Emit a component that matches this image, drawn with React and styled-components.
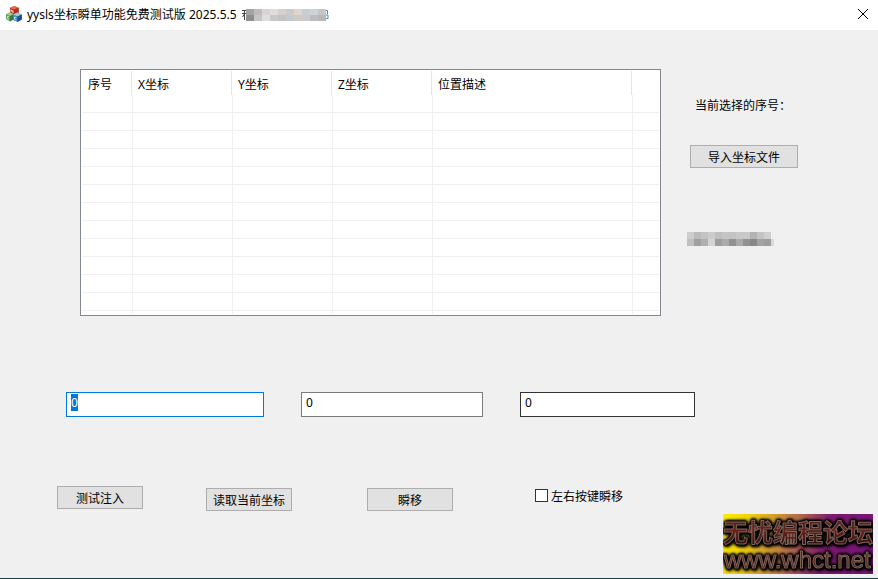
import React, { useEffect, useRef } from 'react'
import styled, { createGlobalStyle } from 'styled-components'

const GlobalStyle = createGlobalStyle`
  * {
    box-sizing: border-box;
  }

  body {
    margin: 0;
    background: #f0f0f0;
    color: #000;
    font: 12px/16px 'Noto Sans', 'Noto Sans CJK SC', sans-serif;
  }

  button,
  input {
    font: inherit;
    color: inherit;
    border-radius: 0;
  }
`

const Window = styled.div`
  position: relative;
  display: flex;
  flex-direction: column;
  min-height: 100vh;
  border-bottom: 1px solid #17444c;
`

const TitleBar = styled.header`
  display: flex;
  align-items: center;
  gap: 5px;
  height: 30px;
  padding: 0 10px 2px 6px;
  background: #fff;
`

const Title = styled.h1`
  display: flex;
  align-items: center;
  gap: 5px;
  flex: 1;
  margin: 0;
  padding-top: 2px;
  font-size: 12px;
  font-weight: 400;
  white-space: nowrap;
`

const CloseButton = styled.button`
  display: flex;
  padding: 0;
  border: 0;
  background: none;
`

const Content = styled.main`
  flex: 1;
  padding-top: 39px;
`

const TopRow = styled.section`
  display: flex;
  align-items: flex-start;
  gap: 26px;
  padding-left: 80px;
`

const ListFrame = styled.div`
  flex: 1;
  padding: 1px;
  border: 1px solid #828790;
  background: #fff;
`

const CoordTable = styled.table`
  width: 100%;
  table-layout: fixed;
  border-collapse: separate;
  border-spacing: 0;
`

const HeadCell = styled.th`
  width: ${props => props.$width};
  height: 24px;
  padding: 3px 6px 0;
  border-right: ${props => (props.$width === 'auto' ? '0' : '1px solid #e5e5e5')};
  font-weight: 400;
  text-align: left;
`

const Cell = styled.td`
  height: ${props => (props.$cut ? '3px' : '18px')};
  padding: 0;
  border-bottom: ${props => (props.$cut ? '0' : '1px solid #f0f0f0')};

  & + & {
    border-left: 1px solid #f0f0f0;
  }
`

const Side = styled.aside`
  display: flex;
  flex-direction: column;
  align-items: flex-start;
  width: 191px;
  padding-top: 29px;
`

const SideLabel = styled.p`
  margin: 0 0 31px;
  padding-left: 8px;
`

const Button = styled.button`
  width: ${props => (props.$wide ? '108px' : '86px')};
  height: 23px;
  padding: 2px 0 0;
  border: 1px solid #adadad;
  background: #e1e1e1;
  line-height: 16px;
  white-space: nowrap;
  align-self: ${props => props.$align || 'auto'};
`

const SideButton = styled(Button)`
  margin: 0 0 64px 3px;
`

const Inputs = styled.section`
  display: grid;
  grid-template-columns: 198fr 182fr 175fr;
  gap: 37px;
  padding: 76px 183px 0 66px;
`

const Input = styled.input`
  width: 100%;
  min-width: 0;
  height: 25px;
  padding: 0 4px 4px;
  border: 1px solid ${props => props.$border};
  background: #fff;
  outline: none;

  &:focus {
    border-color: #0078d7;
  }

  &::selection {
    background: #0078d7;
    color: #fff;
  }
`

const Actions = styled.section`
  display: grid;
  grid-template-columns: 149fr 161fr 168fr 343fr;
  min-height: 25px;
  margin-top: 69px;
  padding-left: 57px;
`

const CheckLabel = styled.label`
  display: flex;
  align-items: flex-start;
  gap: 3px;
  padding-top: 3px;
`

const CheckBox = styled.input`
  appearance: none;
  width: 13px;
  height: 13px;
  margin: 0;
  border: 1px solid #333;
  background: #fff;

  &:checked {
    background: #333;
  }
`

const Banner = styled.svg`
  position: absolute;
  right: 5px;
  bottom: 4px;
`

const BannerText = styled.g`
  fill: url(#ink);
  stroke: #7d6459;
  stroke-width: 1px;
  stroke-linejoin: round;
  filter: drop-shadow(0 0 1px #000) drop-shadow(0 0 1px #000) drop-shadow(0 0 1px #000)
    drop-shadow(1px 1px 1px #000);
`

const columns = [
  { name: '序号', width: '50px' },
  { name: 'X坐标', width: '100px' },
  { name: 'Y坐标', width: '100px' },
  { name: 'Z坐标', width: '100px' },
  { name: '位置描述', width: '200px' },
  { name: '', width: 'auto' },
]

const rows = Array.from({ length: 13 }, (_, i) => i)

const titleBlocks = [
  ['#a3a3a3', '#bdbdbd', '#d9d5d5', '#e2dcda', '#d5d0ce', '#c9cbcd', '#dcd6cf', '#c8cdd4', '#d2d2d4', '#c5c6c8'],
  ['#8e8e8e', '#c4c4c4', '#dedede', '#cac8c8', '#c6c2c0', '#c6c9cc', '#cfcac4', '#c9cbcd', '#bcbdc0', '#b5b7b9'],
]

const sideBlocks = [
  ['#cdcdcd', '#bcbcbc', '#c4c4c4', '#cbcbcb', '#bfbfbf', '#c5c5c5', '#c4c4c4', '#c8c8c8', '#c8c8c8', '#b3b3b3', '#c4c4c4', '#d0d0d0'],
  ['#bfbfbf', '#a0a0a0', '#afafaf', '#d3d3d3', '#9d9d9d', '#ababab', '#929292', '#aaaaaa', '#929292', '#888888', '#a2a2a2', '#9d9d9d'],
]

const AppIcon = () => (
  <svg width="16" height="16" viewBox="0 0 16 16" aria-hidden="true">
    <path d="M4 1.8 8.4 0 12.6 1.8v5.6L8 9.6 4 7.6z" fill="#c43a24" />
    <path d="M4 1.8 8.4 0 12.6 1.8 7.8 3.6z" fill="#e0705a" />
    <path d="M7.8 3.6 12.6 1.8v5.6L8 9.6z" fill="#b5301c" />
    <path d="M0 8.2 3.8 6.2 7.6 8.2v5L4 15.4 0 13z" fill="#5c9f50" />
    <path d="M0 8.2 3.8 6.2 7.6 8.2 4 10z" fill="#a2cb8d" />
    <path d="M4 10 7.6 8.2v5L4 15.4z" fill="#357a40" />
    <path d="M7 8.6 11.6 6.6 15.8 8.4v5.2L11.4 16 7 14z" fill="#3d82be" />
    <path d="M7 8.6 11.6 6.6 15.8 8.4 11.4 10.4z" fill="#9bc7e7" />
    <path d="M11.4 10.4 15.8 8.4v5.2L11.4 16z" fill="#1d4e91" />
    <path d="M5 6V3.8L6 5.2 7 4.8V7M3 10.8l-1.6-.4v2l1.6.8M10.4 11.6l-1.8-.6v2.4l1.8.7" fill="none" stroke="#fff" strokeWidth=".7" />
  </svg>
)

const TitleMosaic = () => (
  <svg width="87" height="12" viewBox="0 0 87 12" aria-hidden="true">
    <path d="M0 1.5h4M2.5 1v10M0 4.5h4M2.5 5 .5 8" fill="none" stroke="#444" />
    {titleBlocks.map((line, y) =>
      line.map((fill, x) => (
        <rect key={`${x}-${y}`} x={4 + x * 8} y={y * 6} width="8" height="6" fill={fill} />
      ))
    )}
    <path d="M84 1.5h1.5v3.5M84 6h2v3.5h-2" fill="none" stroke="#5689b0" />
  </svg>
)

const SideMosaic = () => (
  <svg width="88" height="14" viewBox="0 0 88 14" aria-hidden="true">
    {sideBlocks.map((line, y) =>
      line.map((fill, x) => (
        <rect key={`${x}-${y}`} x={x * 7} y={y * 7} width="7" height="7" fill={fill} />
      ))
    )}
    <rect x="84" y="7" width="3" height="7" fill="#d9d9d9" />
  </svg>
)

const SiteBanner = () => (
  <Banner width="150" height="60" viewBox="0 0 150 60">
    <defs>
      <linearGradient id="sky" x1="0" x2="1" y1="0" y2="0.1">
        <stop offset="0" stopColor="#fff000" />
        <stop offset=".18" stopColor="#efd10c" />
        <stop offset=".5" stopColor="#b66b4c" />
        <stop offset=".72" stopColor="#7c1a6d" />
        <stop offset="1" stopColor="#771478" />
      </linearGradient>
      <linearGradient id="ink" x1="0" x2="0" y1="0" y2="1">
        <stop offset="0" stopColor="#3a2a26" />
        <stop offset=".5" stopColor="#6b211b" />
        <stop offset="1" stopColor="#1a0c0a" />
      </linearGradient>
    </defs>
    <rect width="150" height="60" fill="url(#sky)" />
    <BannerText>
      <text x="0" y="28" fontSize="25" fontWeight="700" fontFamily="'Noto Sans CJK SC', sans-serif">
        无忧编程论坛
      </text>
      <text x="1" y="54" fontSize="24" fontFamily="'Liberation Sans', sans-serif">
        www.whct.net
      </text>
    </BannerText>
  </Banner>
)

export default function App() {
  const first = useRef(null)

  useEffect(() => {
    first.current.focus()
    first.current.select()
  }, [])

  return (
    <Window>
      <GlobalStyle />
      <TitleBar>
        <AppIcon />
        <Title>
          yysls坐标瞬单功能免费测试版 2025.5.5
          <TitleMosaic />
        </Title>
        <CloseButton type="button" aria-label="关闭">
          <svg width="10" height="10" viewBox="0 0 10 10">
            <path d="M0 0 10 10M10 0 0 10" stroke="#000" />
          </svg>
        </CloseButton>
      </TitleBar>
      <Content>
        <TopRow>
          <ListFrame>
            <CoordTable>
              <thead>
                <tr>
                  {columns.map(col => (
                    <HeadCell key={col.name} $width={col.width}>
                      {col.name}
                    </HeadCell>
                  ))}
                </tr>
              </thead>
              <tbody>
                {rows.map(row => (
                  <tr key={row}>
                    {columns.map(col => (
                      <Cell key={col.name} $cut={row === rows.length - 1} />
                    ))}
                  </tr>
                ))}
              </tbody>
            </CoordTable>
          </ListFrame>
          <Side>
            <SideLabel>当前选择的序号：</SideLabel>
            <SideButton type="button" $wide>
              导入坐标文件
            </SideButton>
            <SideMosaic />
          </Side>
        </TopRow>
        <Inputs>
          <Input ref={first} aria-label="X坐标" defaultValue="0" $border="#7a7a7a" />
          <Input aria-label="Y坐标" defaultValue="0" $border="#7a7a7a" />
          <Input aria-label="Z坐标" defaultValue="0" $border="#333" />
        </Inputs>
        <Actions>
          <Button type="button" $align="start">测试注入</Button>
          <Button type="button" $align="end">读取当前坐标</Button>
          <Button type="button" $align="end">瞬移</Button>
          <div>
            <CheckLabel>
              <CheckBox type="checkbox" />
              左右按键瞬移
            </CheckLabel>
          </div>
        </Actions>
      </Content>
      <SiteBanner />
    </Window>
  )
}
